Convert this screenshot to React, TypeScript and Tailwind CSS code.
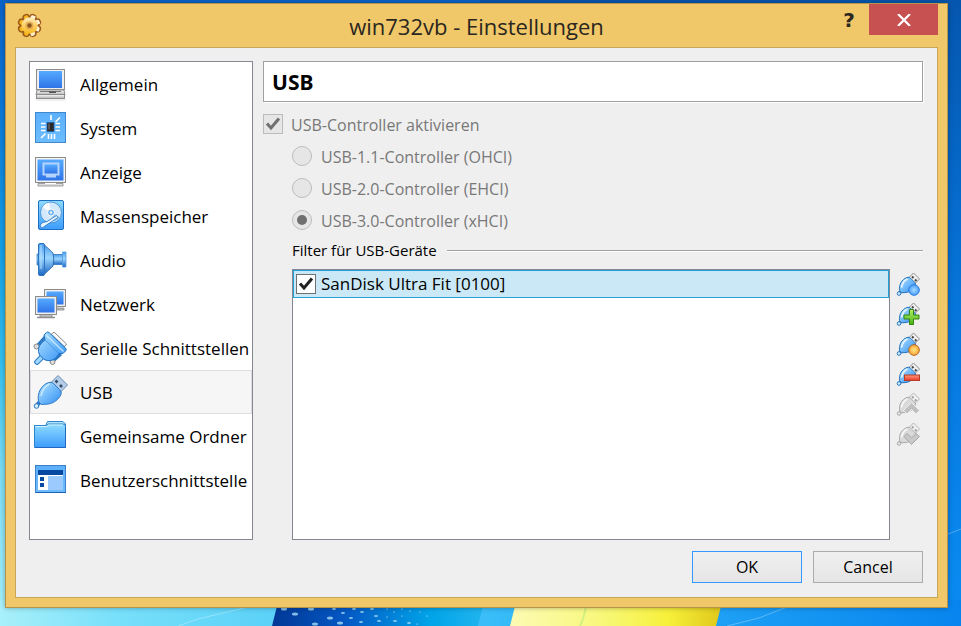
import { useState } from 'react';
import type { ReactNode } from 'react';

function Gradients() {
  return (
    <svg className="absolute h-0 w-0" aria-hidden="true">
      <defs>
        <linearGradient id="screen" x1="0" y1="0" x2="0" y2="1">
          <stop offset="0" stopColor="#55aaff" />
          <stop offset="1" stopColor="#2f74e8" />
        </linearGradient>
        <linearGradient id="tile" x1="0" y1="0" x2="0" y2="1">
          <stop offset="0" stopColor="#5cb0fb" />
          <stop offset="1" stopColor="#6cbcff" />
        </linearGradient>
        <linearGradient id="aqua" x1="0" y1="0" x2="0" y2="1">
          <stop offset="0" stopColor="#8fdcff" />
          <stop offset="1" stopColor="#3d9cfc" />
        </linearGradient>
        <linearGradient id="plug" x1="0" y1="0" x2="1" y2="1">
          <stop offset="0" stopColor="#b4e4ff" />
          <stop offset="1" stopColor="#2f8ff5" />
        </linearGradient>
        <linearGradient id="horn" x1="0" y1="0" x2="0" y2="1">
          <stop offset="0" stopColor="#4a9cec" />
          <stop offset="0.45" stopColor="#9cd6ff" />
          <stop offset="1" stopColor="#1d66c4" />
        </linearGradient>
        <linearGradient id="silver" x1="0" y1="0" x2="0" y2="1">
          <stop offset="0" stopColor="#fafafa" />
          <stop offset="1" stopColor="#b4b4b4" />
        </linearGradient>
        <linearGradient id="gold" gradientUnits="userSpaceOnUse" x1="0" y1="3" x2="0" y2="24">
          <stop offset="0" stopColor="#fff6dc" />
          <stop offset="0.5" stopColor="#ffd067" />
          <stop offset="1" stopColor="#f4b410" />
        </linearGradient>
        <radialGradient id="blueDot">
          <stop offset="0" stopColor="#a5dcff" />
          <stop offset="1" stopColor="#4a9dff" />
        </radialGradient>
        <radialGradient id="orangeDot">
          <stop offset="0" stopColor="#ffe680" />
          <stop offset="1" stopColor="#ffa63a" />
        </radialGradient>
        <linearGradient id="green" x1="0" y1="0" x2="0" y2="1">
          <stop offset="0" stopColor="#b4f06a" />
          <stop offset="1" stopColor="#46b414" />
        </linearGradient>
        <linearGradient id="red" x1="0" y1="0" x2="0" y2="1">
          <stop offset="0" stopColor="#ff9a80" />
          <stop offset="1" stopColor="#e83a22" />
        </linearGradient>
      </defs>
    </svg>
  );
}

function Wallpaper() {
  const dots = [
    [284, 609, 3], [311, 609, 3], [334, 609, 2], [354, 609, 2], [372, 609, 2], [295, 614, 3], [343, 613, 2],
    [362, 612, 2], [387, 609, 1], [402, 609, 1], [394, 612, 1], [410, 611, 1], [330, 618, 3], [351, 618, 2],
    [376, 616, 2], [387, 617, 1], [402, 616, 1], [427, 616, 1], [315, 624, 3], [340, 623, 3], [361, 622, 2],
    [379, 621, 2], [395, 621, 2], [409, 623, 2], [417, 624, 1], [420, 612, 1],
  ];
  return (
    <svg
      className="absolute inset-0 h-full w-full"
      viewBox="0 0 961 626"
      preserveAspectRatio="none"
      aria-hidden="true"
    >
      <defs>
        <linearGradient id="skyLeft" x1="0" y1="0" x2="0" y2="1">
          <stop offset="0" stopColor="#0a63c8" />
          <stop offset="0.15" stopColor="#0a75d6" />
          <stop offset="0.4" stopColor="#149fe6" />
          <stop offset="0.58" stopColor="#34c0ee" />
          <stop offset="0.75" stopColor="#7adcf4" />
          <stop offset="1" stopColor="#a8f0fa" />
        </linearGradient>
        <linearGradient id="skyRight" x1="0" y1="0" x2="0" y2="1">
          <stop offset="0" stopColor="#0556ae" />
          <stop offset="0.5" stopColor="#0676dc" />
          <stop offset="1" stopColor="#0a8cf2" />
        </linearGradient>
        <linearGradient id="ground" x1="0" y1="0" x2="1" y2="0">
          <stop offset="0" stopColor="#a8f0fa" />
          <stop offset="0.12" stopColor="#78e0fa" />
          <stop offset="0.28" stopColor="#5cd2f8" />
          <stop offset="0.52" stopColor="#38bcf8" />
          <stop offset="0.78" stopColor="#1a9cf4" />
          <stop offset="1" stopColor="#0884ee" />
        </linearGradient>
        <linearGradient id="paneBlue" x1="0" y1="0" x2="1" y2="0">
          <stop offset="0" stopColor="#023896" />
          <stop offset="0.35" stopColor="#0458c4" />
          <stop offset="0.75" stopColor="#00a4e8" />
          <stop offset="1" stopColor="#20b4ee" />
        </linearGradient>
        <linearGradient id="paneYellow" x1="0" y1="0" x2="1" y2="0">
          <stop offset="0" stopColor="#fdfbb4" />
          <stop offset="0.4" stopColor="#f8f880" />
          <stop offset="0.75" stopColor="#f6f03a" />
          <stop offset="1" stopColor="#e0c81c" />
        </linearGradient>
      </defs>
      <rect width="480" height="626" fill="url(#skyLeft)" />
      <rect x="480" width="481" height="626" fill="url(#skyRight)" />
      <rect y="600" width="961" height="26" fill="url(#ground)" />
      <path d="M178 626l20-7 50-12M727 626l32-8 28-11M931 541l30-12" fill="none" stroke="#fff" strokeOpacity="0.3" />
      <path d="M277 606l-5 20h206l5-20z" fill="url(#paneBlue)" />
      {dots.map(([x, y, r]) => (
        <ellipse key={`${x}-${y}`} cx={x} cy={y} rx={r} ry={r / 2} fill="#a8dcf4" opacity="0.8" />
      ))}
      <path d="M515 606l-5 20h206l5-20z" fill="url(#paneYellow)" />
      <path d="M586 606q-2 12-6 20" fill="none" stroke="#d4f080" strokeWidth="2" />
    </svg>
  );
}

function GearIcon() {
  const angles = [22.5, 67.5, 112.5, 157.5];
  return (
    <svg className="h-7 w-7" viewBox="-1 0 28 28" aria-hidden="true">
      <g stroke="#9c5a1c" strokeWidth="7.5" strokeLinecap="round">
        {angles.map((a) => (
          <path key={a} d="M13.5 5v17" transform={`rotate(${a} 13.5 13.5)`} />
        ))}
      </g>
      <circle cx="13.5" cy="13.5" r="10" fill="#9c5a1c" />
      <g stroke="url(#gold)" strokeWidth="4.5" strokeLinecap="round">
        {angles.map((a) => (
          <path key={a} d="M13.4 5h.2v17" fill="none" transform={`rotate(${a} 13.5 13.5)`} />
        ))}
      </g>
      <circle cx="13.5" cy="13.5" r="8" fill="url(#gold)" />
      <circle cx="13.5" cy="13.5" r="4" fill="#d9a04a" opacity="0.7" />
      <circle cx="13.5" cy="13.5" r="2.2" fill="#8a5420" />
    </svg>
  );
}

function GeneralIcon() {
  return (
    <>
      <rect x="3.5" y="3.5" width="28" height="20" fill="#eee" stroke="#8c8c8c" />
      <rect x="6" y="5" width="23" height="17" fill="url(#screen)" />
      <path d="M4 24h27l1 5H3z" fill="url(#silver)" stroke="#8c8c8c" />
      <path d="M7 25.5h21" stroke="#777" />
      <path d="M16 25.5h7v1.5h-7z" fill="#555" />
      <rect x="3.5" y="28.5" width="28" height="4" fill="url(#silver)" stroke="#8c8c8c" />
      <path d="M3 34h30" stroke="#000" strokeOpacity="0.12" />
    </>
  );
}

function SystemIcon() {
  return (
    <>
      <rect x="2.5" y="2.5" width="30" height="30" fill="url(#tile)" stroke="#4088cc" />
      <g stroke="#fff" strokeWidth="1.6">
        <path d="M18 5v5M27 7.5l-4.500 4.500M8 13.5h4.500M8 17h4.500M8 20.5h4.500M22.5 13.5H27M22.5 17H27M22.5 20.5H27M12.5 23.5L8 28M15.5 24v5M18.5 24v5M21.5 24v5" />
      </g>
      <rect x="14" y="12.5" width="7" height="9" fill="#2b2b2b" stroke="#1e5aa8" strokeWidth="0.6" />
      <path d="M15 13.5h2v6h-2z" fill="#555" />
    </>
  );
}

function DisplayIcon() {
  return (
    <>
      <rect x="2.5" y="3.5" width="30" height="25" fill="#f4f4f4" stroke="#8c8c8c" />
      <rect x="4.5" y="5.5" width="26" height="21" fill="url(#screen)" />
      <path d="M9.5 8.500h17v13h-3.500v2h-10v-2H9.5z" fill="#b4d4ff" />
      <rect x="11.5" y="10.5" width="13" height="9" fill="url(#screen)" />
      <path d="M5 29.5h25v2.500H5z" fill="#ddd" stroke="#8c8c8c" strokeWidth="0.8" />
      <path d="M12 29.5h11" stroke="#fff" />
    </>
  );
}

function StorageIcon() {
  return (
    <>
      <rect x="5.5" y="2.5" width="25" height="29" rx="1.5" fill="url(#aqua)" stroke="#1e6fc4" />
      <circle cx="18" cy="14.5" r="10.5" fill="#d4e9fb" stroke="#3c88cc" strokeWidth="0.8" />
      <path d="M18 14.5L9.5 9A10 10 0 0 1 16 4.6z" fill="#fff" />
      <path d="M18 14.5l9 4.500a10 10 0 0 1-6 5z" fill="#9ccaf0" />
      <circle cx="18" cy="14.5" r="3.5" fill="#74b4ec" stroke="#fff" />
      <circle cx="18" cy="14.5" r="1.2" fill="#eaf6ff" />
      <path d="M23.5 17.5l1.500 2-13 8.500c-3 3-6 1-4-2 1.500-2 4-1.800 6-2.500z" fill="#eaf6ff" stroke="#2c78c4" strokeWidth="0.9" />
    </>
  );
}

function AudioIcon() {
  return (
    <>
      <path d="M4 12h3v11H4z" fill="url(#horn)" stroke="#3f88d0" strokeWidth="0.8" />
      <path d="M19 12.5h11v10H19z" fill="url(#horn)" stroke="#2c74c0" strokeWidth="0.8" />
      <path d="M29.500 10h3.500v15h-3.500z" fill="url(#horn)" stroke="#5ca0e0" strokeWidth="0.8" />
      <path d="M10.5 2L20 11q1.500 6.500 0 13l-9.500 9z" fill="url(#horn)" stroke="#1d5ca8" strokeWidth="0.8" />
      <rect x="5.5" y="1.5" width="6" height="32" rx="1.5" fill="url(#horn)" stroke="#2c74c0" />
      <path d="M8 3v24" stroke="#b4e0ff" strokeWidth="1.5" opacity="0.7" />
    </>
  );
}

function NetworkIcon() {
  return (
    <>
      <rect x="11.5" y="3.5" width="21" height="17" fill="#eee" stroke="#8c8c8c" />
      <rect x="13.5" y="5.5" width="17" height="13" fill="url(#screen)" />
      <path d="M20 22h11v2H20z" fill="#bbb" stroke="#8c8c8c" strokeWidth="0.8" />
      <rect x="2.5" y="10.5" width="21" height="18" fill="#eee" stroke="#8c8c8c" />
      <rect x="4.5" y="12.5" width="17" height="14" fill="url(#screen)" />
      <path d="M7 29h12v2H7z" fill="#ddd" stroke="#8c8c8c" strokeWidth="0.8" />
      <path d="M4 31.5h18" stroke="#8c8c8c" strokeWidth="1.5" />
    </>
  );
}

function SerialIcon() {
  return (
    <>
      <path d="M17 5.5L21 2l12.500 12-3 4z" fill="#fafafa" stroke="#8c8c8c" />
      <path d="M19 5l12 11.500" stroke="#bbb" strokeWidth="1.5" />
      <path d="M9 27l-5 5" stroke="#2c78c4" strokeWidth="5.5" strokeLinecap="round" />
      <path d="M9 27l-5 5" stroke="#9cd8ff" strokeWidth="3.5" strokeLinecap="round" />
      <path d="M4 16l8-9M20 31l8-7" stroke="#2c78c4" strokeWidth="3" />
      <circle cx="3.500" cy="16.5" r="2.500" fill="#ddd" stroke="#888" />
      <circle cx="19.5" cy="32" r="2.500" fill="#ddd" stroke="#888" />
      <path
        d="M11 5l2.500-2.500q1-1 2.500 0L32.5 18q1.500 1.500 0 3L30 23.500h-4L23 28q-5.500 4.500-12 1.500l-4.500-4.500Q3.500 18 9 12.500l3-2.500z"
        fill="url(#plug)"
        stroke="#1e6fc4"
      />
      <path d="M12 10l14 13.500" stroke="#1e6fc4" strokeWidth="0.8" opacity="0.6" />
      <path d="M13 5l17.500 16.500" stroke="#d4f0ff" strokeWidth="1.5" opacity="0.8" />
    </>
  );
}

function UsbIcon() {
  return (
    <>
      <path d="M18 8.5l7-7L34.5 11l-7 7z" fill="#b4cce8" stroke="#6a8cb4" />
      <path d="M22.5 6.500l2 2M27 11l2 2" stroke="#38506c" strokeWidth="2.600" />
      <path d="M8 27l-4 4" stroke="#2c78c4" strokeWidth="4" />
      <circle cx="3.500" cy="32" r="2.300" fill="#d4eeff" stroke="#2c78c4" />
      <path
        d="M15.5 8.500q3-1 5 1l6 6q2.500 2.500 1.500 5c-2.500 5-7 8.500-12.500 9.500l-7 .5L5.5 27.500C4 19 8 11.500 15.500 8.500z"
        fill="url(#plug)"
        stroke="#2c78c4"
      />
      <path d="M8 22q1.500-8.500 8.500-12" fill="none" stroke="#d4f0ff" strokeWidth="1.500" opacity="0.8" />
    </>
  );
}

function FolderIcon() {
  return (
    <>
      <path d="M12.5 8l2-4.500h15.500l2.500 2.500v6h-20z" fill="#b4e4fc" stroke="#2c84cc" />
      <path d="M1.5 7.5H13l2.500-1.500h14.500q2 0 2.500 2v21.500h-31z" fill="url(#aqua)" stroke="#2c84cc" />
      <path d="M2.5 8.5h11l2.500-1.500h14" fill="none" stroke="#d4f4ff" />
      <path d="M2 29.5h30.500V9" fill="none" stroke="#2268c0" />
    </>
  );
}

function InterfaceIcon() {
  return (
    <>
      <rect x="2.5" y="3.5" width="30" height="27" fill="url(#tile)" stroke="#3c80c8" />
      <rect x="5" y="8" width="25" height="5" fill="#0848a0" />
      <rect x="5" y="13" width="25" height="15" fill="#fff" />
      <path d="M7 15h4v4H7zM7 21h4v4H7z" fill="#0848a0" />
      <rect x="15" y="14" width="15" height="14" fill="#9ccaff" />
      <path d="M3 30.5h30" stroke="#1e60b4" />
    </>
  );
}

type FilterActionKind = 'empty' | 'add' | 'edit' | 'remove' | 'up' | 'down';

function FilterIcon({ kind }: { kind: FilterActionKind }) {
  const grey = kind === 'up' || kind === 'down';
  const line = grey ? '#acacac' : '#2874bc';
  return (
    <svg className="h-6 w-6" viewBox="0 0 24 24" aria-hidden="true">
      <path d="M12.5 6l5-5 6 6-5 5z" fill="#f0f0f0" stroke={grey ? '#b4b4b4' : '#8c8c8c'} />
      <path d="M16 4.5l1.500 1.500M19 7.5l1.500 1.500" stroke={grey ? '#a0a0a0' : '#444'} strokeWidth="2" />
      <path d="M5.5 19l-2 2" stroke={line} strokeWidth="3" />
      <circle cx="3" cy="21.500" r="1.800" fill={grey ? '#e4e4e4' : '#d4eeff'} stroke={line} />
      <path
        d="M11 5.500q2-.8 3.500.7l4 4q1.500 1.500.8 3.300C17 17.500 14 20 10 20.500l-4.500.3L3.500 18.500C3 12.500 5.500 7.500 11 5.500z"
        fill={grey ? '#d9d9d9' : 'url(#plug)'}
        stroke={line}
      />
      <path d="M5.500 15.500q1-6 6-8.500" fill="none" stroke="#fff" strokeWidth="1.800" opacity="0.8" />
      {kind === 'empty' && <circle cx="18" cy="18" r="5.300" fill="url(#blueDot)" stroke="#2c7cdc" />}
      {kind === 'add' && (
        <path d="M13.5 7.500h4v5.500h5.500v4h-5.500v5.500h-4v-5.500H8v-4h5.500z" fill="url(#green)" stroke="#348414" />
      )}
      {kind === 'edit' && <circle cx="18" cy="18" r="5.300" fill="url(#orangeDot)" stroke="#b4641e" />}
      {kind === 'remove' && <rect x="8.500" y="13" width="15" height="5.500" fill="url(#red)" stroke="#b43c28" />}
      {kind === 'up' && (
        <path d="M15.500 10.500l8 8-3.500 3.500-4.500-4.500L11 22l-3.500-3.500z" fill="#c0c0c0" stroke="#efefef" />
      )}
      {kind === 'down' && (
        <path d="M8 14.500l3-3 4.500 4.500 4.500-4.500 3.500 3-8 8z" fill="#c8c8c8" stroke="#a8a8a8" />
      )}
    </svg>
  );
}

const pages: { name: string; icon: ReactNode }[] = [
  { name: 'Allgemein', icon: <GeneralIcon /> },
  { name: 'System', icon: <SystemIcon /> },
  { name: 'Anzeige', icon: <DisplayIcon /> },
  { name: 'Massenspeicher', icon: <StorageIcon /> },
  { name: 'Audio', icon: <AudioIcon /> },
  { name: 'Netzwerk', icon: <NetworkIcon /> },
  { name: 'Serielle Schnittstellen', icon: <SerialIcon /> },
  { name: 'USB', icon: <UsbIcon /> },
  { name: 'Gemeinsame Ordner', icon: <FolderIcon /> },
  { name: 'Benutzerschnittstelle', icon: <InterfaceIcon /> },
];

const controllers = ['USB-1.1-Controller (OHCI)', 'USB-2.0-Controller (EHCI)', 'USB-3.0-Controller (xHCI)'];

const filterActions: { kind: FilterActionKind; label: string }[] = [
  { kind: 'empty', label: 'Leeren Filter hinzufügen' },
  { kind: 'add', label: 'Filter hinzufügen' },
  { kind: 'edit', label: 'Filter ändern' },
  { kind: 'remove', label: 'Filter entfernen' },
  { kind: 'up', label: 'Nach oben' },
  { kind: 'down', label: 'Nach unten' },
];

function CheckMark({ className }: { className: string }) {
  return (
    <svg className={`pointer-events-none absolute inset-0 h-5 w-5 ${className}`} viewBox="0 0 20 20" aria-hidden="true">
      <path d="M4 9.500l4 4.500 8-9.500" fill="none" stroke="currentColor" strokeWidth="3" />
    </svg>
  );
}

export default function App() {
  const [page, setPage] = useState('USB');
  const [filterActive, setFilterActive] = useState(true);

  return (
    <div className="relative flex min-h-screen pt-[3px] pr-[13px] pb-[18px] pl-[5px] font-['Open_Sans',sans-serif] text-black">
      <Gradients />
      <Wallpaper />
      <div className="relative flex flex-1 flex-col border border-[#b8934a] bg-[#f0c869] px-[9px] pb-[9px] shadow-[0_0_5px_rgba(0,0,0,0.3)]">
        <header className="flex h-[43px] items-center">
          <div className="flex flex-1 items-center">
            <GearIcon />
          </div>
          <h1 className="text-[22px] leading-[30px] text-[#2b2620]">win732vb - Einstellungen</h1>
          <div className="flex flex-1 items-start justify-end self-stretch">
            <button
              type="button"
              aria-label="Hilfe"
              className="h-[31px] w-10 font-['DejaVu_Sans',sans-serif] text-xl font-bold text-[#2b2620]"
            >
              ?
            </button>
            <button
              type="button"
              aria-label="Schließen"
              className="flex h-[31px] w-[69px] items-center justify-center bg-[#c75050] text-white"
            >
              <svg className="h-3 w-[14px]" viewBox="0 0 14 12" aria-hidden="true">
                <path d="M1 0l12 12M13 0L1 12" stroke="currentColor" strokeWidth="2.2" />
              </svg>
            </button>
          </div>
        </header>

        <div className="flex flex-1 flex-col border border-[#c9a557] bg-[#efefef] pt-[13px] pr-[14px] pb-[14px] pl-[13px]">
          <div className="flex flex-1 gap-[10px]">
            <nav className="w-56 shrink-0 border border-[#828790] bg-white">
              {pages.map((p) => (
                <button
                  key={p.name}
                  type="button"
                  onClick={() => setPage(p.name)}
                  aria-current={page === p.name ? 'page' : undefined}
                  className={`flex h-11 w-full items-center gap-[11px] border pl-[2px] text-left text-[17px] leading-6 whitespace-nowrap ${
                    page === p.name ? 'border-[#dedede] bg-[#f6f6f6]' : 'border-transparent'
                  }`}
                >
                  <svg className="h-9 w-9 shrink-0" viewBox="0 0 36 36" aria-hidden="true">
                    {p.icon}
                  </svg>
                  <span className="pt-[2px]">{p.name}</span>
                </button>
              ))}
            </nav>

            <main className="flex flex-1 flex-col">
              <h2 className="h-[41px] border border-[#a0a0a0] bg-white px-2 font-['Noto_Sans',sans-serif] text-[21px] leading-10 font-bold shadow-[1px_1px_0_#fff]">
                {page}
              </h2>

              <div className="mt-3 flex flex-col gap-3 text-base leading-5 text-[#787878]">
                <label className="flex h-5 items-center gap-2">
                  <span className="relative h-5 w-5">
                    <input
                      type="checkbox"
                      checked
                      disabled
                      readOnly
                      className="block h-5 w-5 appearance-none border border-[#bcbcbc] bg-[#e6e6e6]"
                    />
                    <CheckMark className="text-[#707070]" />
                  </span>
                  <span className="pt-[2px]">USB-Controller aktivieren</span>
                </label>
                {controllers.map((name, i) => (
                  <label key={name} className="ml-[29px] flex h-5 items-center gap-[9px]">
                    <span className="relative h-5 w-5">
                      <input
                        type="radio"
                        name="controller"
                        checked={i === 2}
                        disabled
                        readOnly
                        className="peer block h-5 w-5 appearance-none rounded-full border border-[#bcbcbc] bg-[#e6e6e6]"
                      />
                      <span className="absolute inset-[5px] hidden rounded-full bg-[#707070] peer-checked:block" />
                    </span>
                    <span className="pt-[2px]">{name}</span>
                  </label>
                ))}
              </div>

              <div className="mt-[10px] ml-[29px] flex items-center gap-[10px]">
                <h3 className="text-[15px] leading-5">Filter für USB-Geräte</h3>
                <div className="h-px flex-1 bg-[#a0a0a0] shadow-[0_1px_0_#fff]" />
              </div>

              <div className="mt-[9px] ml-[29px] flex flex-1 gap-[6px]">
                <div className="flex-1 border border-[#828790] bg-white">
                  <label className="flex h-7 items-center gap-[5px] border border-[#26a0da] bg-[#cbe8f6] pl-[2px] text-[17px] leading-6">
                    <span className="relative h-5 w-5">
                      <input
                        type="checkbox"
                        checked={filterActive}
                        onChange={(e) => setFilterActive(e.target.checked)}
                        className="block h-5 w-5 appearance-none border border-[#707070] bg-white"
                      />
                      {filterActive && <CheckMark className="text-[#212121]" />}
                    </span>
                    SanDisk Ultra Fit [0100]
                  </label>
                </div>
                <div className="flex w-[27px] flex-col gap-[6px] pt-[3px]">
                  {filterActions.map((a) => (
                    <button
                      key={a.kind}
                      type="button"
                      aria-label={a.label}
                      disabled={a.kind === 'up' || a.kind === 'down'}
                      className="h-6 w-6"
                    >
                      <FilterIcon kind={a.kind} />
                    </button>
                  ))}
                </div>
              </div>
            </main>
          </div>

          <div className="mt-[11px] flex justify-end gap-[11px] text-base">
            <button
              type="button"
              className="h-8 w-[110px] border border-[#3399ff] bg-gradient-to-b from-[#f0f0f0] to-[#e5e5e5]"
            >
              OK
            </button>
            <button
              type="button"
              className="h-8 w-[110px] border border-[#acacac] bg-gradient-to-b from-[#f0f0f0] to-[#e5e5e5]"
            >
              Cancel
            </button>
          </div>
        </div>
      </div>
    </div>
  );
}
